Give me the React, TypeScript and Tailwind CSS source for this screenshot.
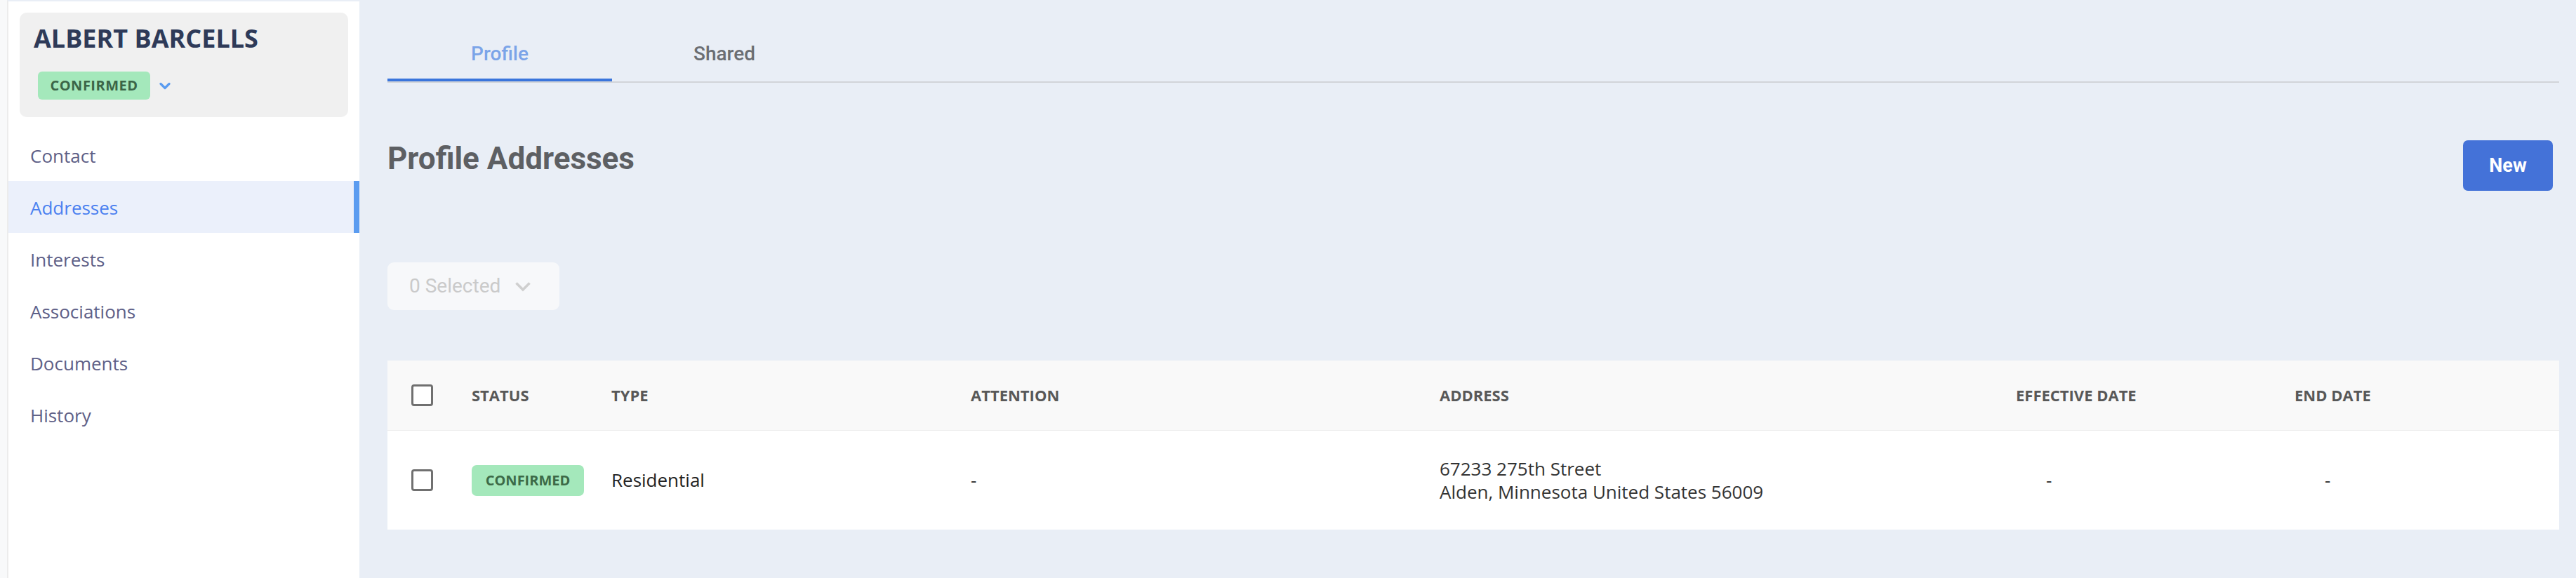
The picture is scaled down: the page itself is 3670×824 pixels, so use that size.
const navItems = ["Contact", "Addresses", "Interests", "Associations", "Documents", "History"];

function Sidebar() {
  return (
    <div className="flex shrink-0">
      <div className="w-[10px] bg-[#f8f9fa]" />
      <aside className="w-[502px] border-l-2 border-[#ececec] border-t-2 border-t-[#e9eef6] bg-white font-['Open_Sans',sans-serif]">
        {/* Member card */}
        <div className="mx-[16px] mt-[16px] rounded-[10px] bg-[#f0f0f0] pl-[20px] pt-[19px] pb-[25px]">
          <h1 className="text-[36px] leading-[36px] font-bold text-[#2e3a58]">ALBERT BARCELLS</h1>
          <div className="mt-[29px] ml-[6px] flex items-center gap-[13px]">
            <span className="flex h-[40px] w-[160px] items-center justify-center rounded-[6px] bg-[#a4e8bb] text-[20px] font-bold tracking-[0.5px] text-[#3b6547]">
              CONFIRMED
            </span>
            <svg className="h-[11px] w-[16px] text-[#5b9cf0]" viewBox="0 0 16 11" fill="none">
              <path d="M2 2.5l6 6 6-6" stroke="currentColor" strokeWidth={3.2} strokeLinecap="round" strokeLinejoin="round" />
            </svg>
          </div>
        </div>

        {/* Nav */}
        <nav className="mt-[17px]">
          {navItems.map((item) => {
            const active = item === "Addresses";
            return (
              <div
                key={item}
                className={
                  active
                    ? "flex h-[74px] items-center border-r-[8px] border-[#5b9cf0] bg-[#ebf0fb] pl-[31px] pt-[3px] text-[26px] font-medium text-[#4a80f0]"
                    : "flex h-[74px] items-center pl-[31px] pt-[3px] text-[26px] font-medium text-[#5e6087]"
                }
              >
                {item}
              </div>
            );
          })}
        </nav>
      </aside>
    </div>
  );
}

function Checkbox() {
  return <div className="h-[31px] w-[31px] rounded-[4px] border-[3px] border-[#707070] bg-white" />;
}

const cols = "grid grid-cols-[86px_199px_512px_668px_821px_397px_1fr] items-center pl-[34px]";

function AddressTable() {
  return (
    <div className="mt-[72px] bg-white font-['Open_Sans',sans-serif]">
      <div className={`${cols} h-[100px] border-b border-[#ececec] bg-[#f9f9f9] text-[22px] font-bold uppercase text-[#585858]`}>
        <Checkbox />
        <span>Status</span>
        <span>Type</span>
        <span>Attention</span>
        <span>Address</span>
        <span>Effective Date</span>
        <span>End Date</span>
      </div>
      <div className={`${cols} h-[141px]`}>
        <Checkbox />
        <span className="flex h-[44px] w-[160px] items-center justify-center rounded-[7px] bg-[#a4e8bb] text-[20px] font-bold text-[#3c6a47]">
          CONFIRMED
        </span>
        <span className="text-[26px] text-[#222]">Residential</span>
        <span className="text-[26px] text-[#333]">-</span>
        <div className="text-[26px] leading-[33px] text-[#333]">
          <div>67233 275th Street</div>
          <div>Alden, Minnesota United States 56009</div>
        </div>
        <span className="pl-[43px] text-[26px] text-[#333]">-</span>
        <span className="pl-[43px] text-[26px] text-[#333]">-</span>
      </div>
    </div>
  );
}

export default function App() {
  return (
    <div className="flex min-h-[824px] w-[3670px] bg-[#e9eef6]">
      <Sidebar />

      <main className="flex-1 pl-[40px] pr-[24px] font-['Roboto',sans-serif]">
        {/* Tabs */}
        <div className="flex border-b-2 border-[#d1d4d9]">
          <button className="h-[116px] w-[320px] border-b-4 border-[#3a75dc] pt-[41px] text-[28px] leading-[44px] font-medium text-[#7ba4e8]">
            Profile
          </button>
          <button className="h-[116px] w-[320px] border-b-4 border-transparent pt-[41px] text-[28px] leading-[44px] font-medium text-[#6b6e73]">
            Shared
          </button>
        </div>

        {/* Heading row */}
        <div className="mt-[82px] flex items-start justify-between">
          <h2 className="mt-[2px] text-[44px] leading-[48px] font-bold text-[#5d5f63]">Profile Addresses</h2>
          <button className="mr-[9px] h-[72px] w-[128px] rounded-[7px] bg-[#4472d8] text-[27px] font-bold text-white">
            New
          </button>
        </div>

        {/* Bulk select */}
        <div className="mt-[102px] flex h-[68px] w-[245px] items-center gap-[20px] rounded-[9px] bg-[#f7f8fa] pl-[31px] text-[28px] text-[#cacaca]">
          <span>0 Selected</span>
          <svg className="h-[15px] w-[24px] text-[#cfcfcf]" viewBox="0 0 24 15" fill="none">
            <path d="M2.5 2.5l9.5 9.5 9.5-9.5" stroke="currentColor" strokeWidth={3.6} />
          </svg>
        </div>

        <AddressTable />
      </main>
    </div>
  );
}
